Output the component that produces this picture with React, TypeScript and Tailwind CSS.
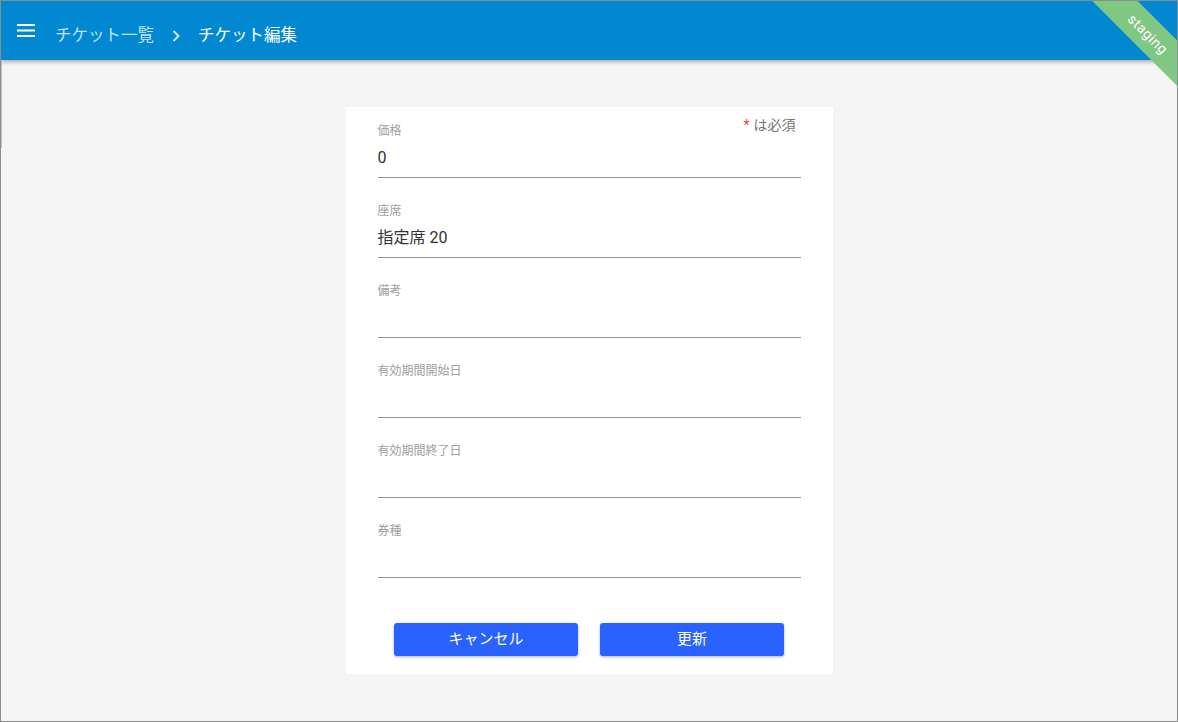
import React from "react";

const fields: { label: string; value: string }[] = [
  { label: "価格", value: "0" },
  { label: "座席", value: "指定席 20" },
  { label: "備考", value: "" },
  { label: "有効期間開始日", value: "" },
  { label: "有効期間終了日", value: "" },
  { label: "券種", value: "" },
];

export default function App() {
  return (
    <div
      className="relative h-[722px] w-[1178px] overflow-hidden border border-[#8c8c8c] bg-[#f5f5f5]"
      style={{ fontFamily: 'Roboto, "Noto Sans CJK JP", sans-serif' }}
    >
      <header className="relative z-10 flex h-[59px] items-center bg-[#0288d1] shadow-[0_2px_4px_rgba(0,0,0,0.3)]">
        <svg className="ml-[16px]" width="18" height="13" viewBox="0 0 18 13">
          <rect x="0" y="0" width="18" height="2" fill="#fff" />
          <rect x="0" y="5.5" width="18" height="2" fill="#fff" />
          <rect x="0" y="11" width="18" height="2" fill="#fff" />
        </svg>
        <div className="ml-[20px] flex items-center pt-[11px] text-[16.5px]">
          <span className="text-[#bfe3f7]">チケット一覧</span>
          <svg className="mx-[18px]" width="8" height="12" viewBox="0 0 8 12">
            <path d="M1.5 1 L6.5 6 L1.5 11" fill="none" stroke="#cde9f9" strokeWidth="2" />
          </svg>
          <span className="text-white">チケット編集</span>
        </div>
      </header>

      <div className="absolute left-0 top-[60px] h-[87px] w-[1px] bg-[#c4c4c4]" />

      <div className="pointer-events-none absolute right-0 top-0 z-20 h-[120px] w-[120px] overflow-hidden">
        <div className="absolute left-[-9px] top-[17px] flex h-[32px] w-[200px] rotate-45 items-center justify-center bg-[#81c784] text-[14px] tracking-[0.5px] text-white">
          staging
        </div>
      </div>

      <main className="mx-auto mt-[47px] w-[487px] bg-white px-[32px] pb-[18px] pt-[8px]">
        <div className="flex h-[20px] items-center justify-end pr-[5px] text-[14px] text-[#757575]">
          <span className="mr-[4px] text-[#f44336]">*</span>
          <span>は必須</span>
        </div>
        <div className="-mt-[12px] flex flex-col gap-[25px]">
          {fields.map((f) => (
            <div key={f.label} className="flex flex-col">
              <div className="h-[16px] text-[12px] leading-[16px] text-[#9e9e9e]">{f.label}</div>
              <div className="h-[39px] border-b border-[#949494] pt-[7px] text-[16px] leading-[24px] text-[#333]">
                {f.value}
              </div>
            </div>
          ))}
        </div>
        <div className="mt-[45px] flex justify-center gap-[22px]">
          <button className="h-[33px] w-[184px] rounded-[3px] bg-[#2962ff] text-[15px] text-white shadow-[0_1px_3px_rgba(0,0,0,0.3)]">
            キャンセル
          </button>
          <button className="h-[33px] w-[184px] rounded-[3px] bg-[#2962ff] text-[15px] text-white shadow-[0_1px_3px_rgba(0,0,0,0.3)]">
            更新
          </button>
        </div>
      </main>
    </div>
  );
}
